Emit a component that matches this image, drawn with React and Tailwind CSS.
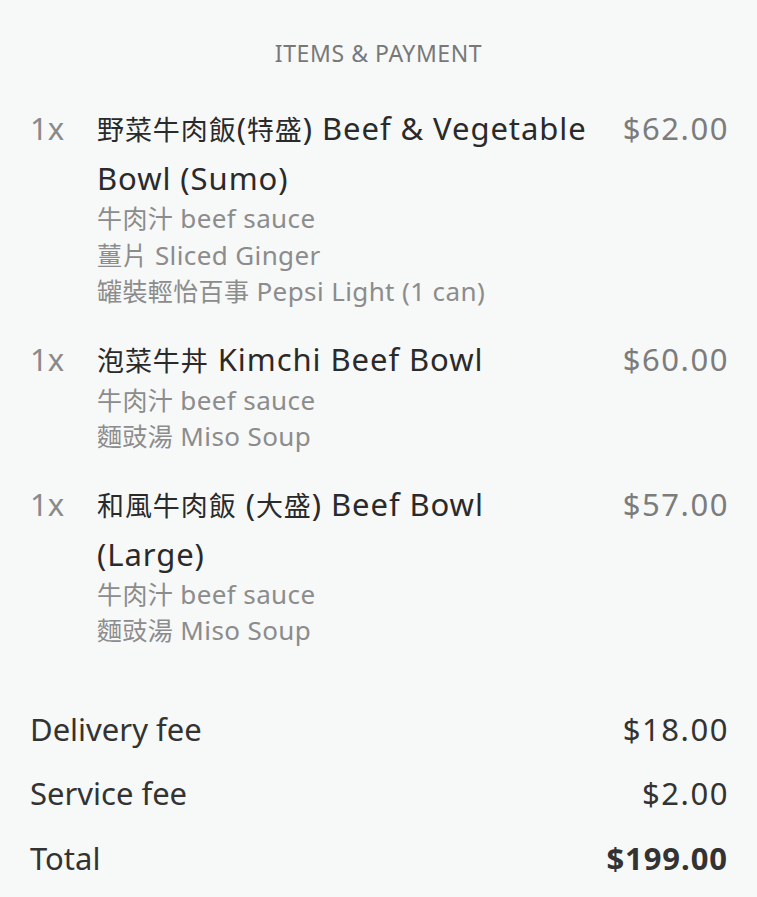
const items = [
  {
    qty: 1,
    name: "野菜牛肉飯(特盛) Beef & Vegetable Bowl (Sumo)",
    price: "$62.00",
    options: ["牛肉汁 beef sauce", "薑片 Sliced Ginger", "罐裝輕怡百事 Pepsi Light (1 can)"],
  },
  {
    qty: 1,
    name: "泡菜牛丼 Kimchi Beef Bowl",
    price: "$60.00",
    options: ["牛肉汁 beef sauce", "麵豉湯 Miso Soup"],
  },
  {
    qty: 1,
    name: "和風牛肉飯 (大盛) Beef Bowl (Large)",
    price: "$57.00",
    options: ["牛肉汁 beef sauce", "麵豉湯 Miso Soup"],
  },
];

const fees = [
  { label: "Delivery fee", amount: "$18.00" },
  { label: "Service fee", amount: "$2.00" },
];

// the chinese glyphs sit a bit smaller than the latin ones in the app font
const Mixed = ({ text, cjkClass }) => {
  const parts = text.split(/([\u3400-\u9fff]+)/);
  return parts.map((p, i) =>
    /[\u3400-\u9fff]/.test(p) ? (
      <span key={i} className={cjkClass}>
        {p}
      </span>
    ) : (
      <span key={i}>{p}</span>
    )
  );
};

const OrderItem = ({ item }) => (
  <div className="flex flex-row items-start justify-between">
    <span className="w-[67px] shrink-0 text-[31px] leading-[49px] text-[#8a8a8a]">
      {item.qty}x
    </span>
    <div className="w-[498px] shrink-0">
      <p className="text-[31px] leading-[49px] tracking-[0.03em] text-[#2a2a2a]">
        <Mixed text={item.name} cjkClass="text-[27px]" />
      </p>
      <div className="-mt-[3px] flex flex-col">
        {item.options.map((opt) => (
          <span key={opt} className="text-[26px] leading-[36.5px] tracking-[0.015em] text-[#8c8c8c]">
            <Mixed text={opt} cjkClass="text-[25px]" />
          </span>
        ))}
      </div>
    </div>
    <span className="-mr-[2px] flex-1 text-right text-[31px] leading-[49px] tracking-[0.05em] text-[#7c7c7c]">
      {item.price}
    </span>
  </div>
);

export default function App() {
  return (
    <div
      className="min-h-[897px] w-full bg-[#f7f8f8] px-[30px] pt-[36px]"
      style={{ fontFamily: '"Noto Sans", "Noto Sans CJK TC", sans-serif' }}
    >
      <h2 className="text-center text-[23px] leading-[34px] tracking-wide text-[#787878]">
        ITEMS &amp; PAYMENT
      </h2>
      <div className="mt-[34px] flex flex-col gap-[25px]">
        {items.map((item, i) => (
          <OrderItem key={i} item={item} />
        ))}
      </div>
      <div className="mt-[60px] flex flex-col gap-[23.5px]">
        {fees.map((f) => (
          <div key={f.label} className="flex flex-row justify-between text-[31px] leading-[41px] text-[#333]">
            <span>{f.label}</span>
            <span className="-mr-[2px] tracking-[0.05em]">{f.amount}</span>
          </div>
        ))}
        <div className="flex flex-row justify-between text-[31px] leading-[41px] text-[#333]">
          <span>Total</span>
          <span className="-mr-[1px] font-bold tracking-[0.03em]">$199.00</span>
        </div>
      </div>
    </div>
  );
}
